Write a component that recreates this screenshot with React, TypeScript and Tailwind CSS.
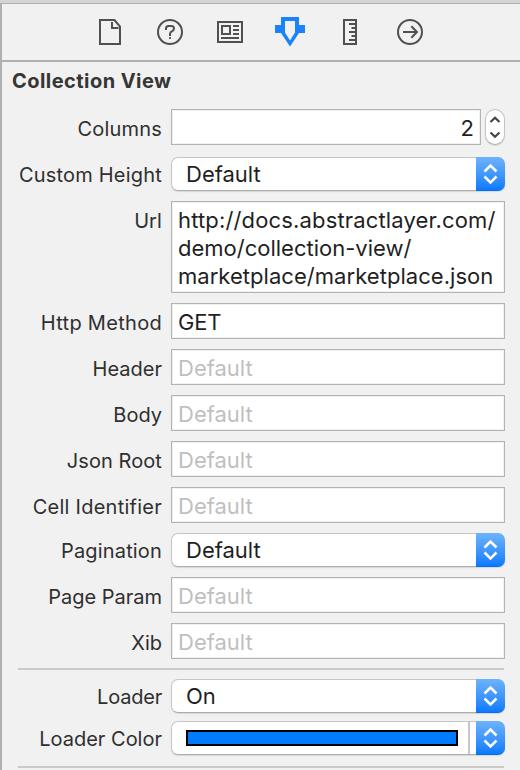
import React from 'react';

function Label({ text, className = '' }: { text: string; className?: string }) {
  return (
    <div className={`w-[160px] shrink-0 whitespace-nowrap text-right text-[20px] leading-7 text-[#2f2f2f] ${className}`}>
      {text}
    </div>
  );
}

function FieldRow({
  label,
  tracking,
  value,
}: {
  label: string;
  tracking?: string;
  value?: string;
}) {
  return (
    <div className="mb-2.5 flex h-9">
      <Label text={label} className={`pt-1.5 ${tracking ?? ''}`} />
      <div
        className={`ml-[9px] w-[334px] border border-[#b3b3b3] bg-white pl-1.5 pt-1 text-[22px] leading-7 shadow-[inset_0_0_0_1px_#f0f0f0] ${
          value ? 'tracking-[-0.2px] text-[#1f1f1f]' : 'text-[#bfbfbf]'
        }`}
      >
        {value ?? 'Default'}
      </div>
    </div>
  );
}

function Arrows() {
  return (
    <div className="flex h-[34px] w-[29px] shrink-0 items-center justify-center rounded-r-[7px] border-b border-[#0a6df0] bg-linear-to-b from-[#6cb3fa] to-[#047aff]">
      <svg width="29" height="34" viewBox="0 0 29 34" fill="none" stroke="#fff" strokeWidth="2.5" className="mt-px">
        <path d="M8.5 14.5 14.5 8.5 20.5 14.5M8.5 19.5 14.5 25.5 20.5 19.5" />
      </svg>
    </div>
  );
}

function PopupRow({
  label,
  tracking = '',
  className = 'mb-2.5',
  children,
}: {
  label: string;
  tracking?: string;
  className?: string;
  children: React.ReactNode;
}) {
  return (
    <div className={`flex h-[34px] ${className}`}>
      <Label text={label} className={`pt-1 ${tracking}`} />
      <div className="ml-[9px] flex w-[334px] rounded-[7px] shadow-[0_1px_1px_#d8d8d8]">
        <div className="flex flex-1 rounded-l-[7px] border border-r-0 border-[#c6c6c6] border-b-[#adadad] bg-white pl-3.5 text-[22px] leading-8 text-[#1f1f1f]">
          {children}
        </div>
        <Arrows />
      </div>
    </div>
  );
}

function Toolbar() {
  return (
    <div className="h-[58px] border-b-2 border-[#b0b0b0]">
      <svg width="518" height="56" viewBox="2 4 518 56" fill="none" stroke="#505050" strokeWidth="2">
        <path d="M100 20H114.5L120 26.5V44H100Z" />
        <path d="M112 22V28H118.5" />
        <circle cx="170" cy="32" r="12" />
        <path d="M166 30V28.5Q166 26 168.5 26H171.5Q174 26 174 28.5Q174 30.3 172 31.2Q170 32 170 34V36M170 37.2V39" />
        <path d="M218 22H242V42H218ZM222 26H230V34H222ZM233 26H239M233 30H239M233 34H239M221 38H239" />
        <path
          d="M281 17H299V25H305V33H299L290 46.5 281 33H275V25H281ZM285 21V32.5L290 40.5 295 32.5V21Z"
          fill="#1a82fc"
          fillRule="evenodd"
          stroke="none"
        />
        <path d="M344 20H356V44H344Z" />
        <path d="M349 24H355M351.5 28H355M349 32H355M351.5 36H355M349 40H355" />
        <circle cx="410" cy="32" r="12" />
        <path d="M403 32H417M411.3 26.2 417 32 411.3 37.8" />
      </svg>
    </div>
  );
}

export default function App() {
  return (
    <div className="h-[770px] w-[520px] overflow-hidden border-t-[3px] border-[#d4d4d4] bg-[#f1f1f1] font-['Inter','Liberation_Sans',sans-serif]">
      <div className="h-[767px] border-l-2 border-t border-[#b0b0b0]">
        <Toolbar />
        <h1 className="h-[47px] pl-2.5 pt-[5px] text-[20px] font-bold leading-7 tracking-[0.45px] text-[#363636]">
          Collection View
        </h1>

        <div className="mb-3 flex h-9">
          <Label text="Columns" className="pt-1.5 tracking-[0.2px]" />
          <div className="ml-[9px] w-[310px] border border-[#b3b3b3] bg-white pr-1.5 pt-1 text-right text-[22px] leading-7 text-[#1f1f1f] shadow-[inset_0_0_0_1px_#f0f0f0]">
            2
          </div>
          <div className="ml-1 h-9 w-5 rounded-full border border-[#c4c4c4] border-b-[#adadad] bg-white shadow-[0_1px_1px_#d8d8d8]">
            <svg width="18" height="34" viewBox="0 0 18 34" fill="none" stroke="#444" strokeWidth="2.2">
              <path d="M4.5 12 9 7.8 13.5 12M4.5 22.5 9 26.7 13.5 22.5" />
            </svg>
          </div>
        </div>

        <PopupRow label="Custom Height" tracking="tracking-[0.2px]">Default</PopupRow>

        <div className="mb-2.5 flex h-[92px]">
          <Label text="Url" className="pt-1.5 tracking-[0.1px]" />
          <div className="ml-[9px] w-[334px] whitespace-nowrap border border-[#b3b3b3] bg-white pl-1.5 pt-1 text-[22px] leading-7 text-[#1f1f1f] shadow-[inset_0_0_0_1px_#f0f0f0]">
            <div className="tracking-[0.15px]">http://docs.abstractlayer.com/</div>
            <div>demo/collection-view/</div>
            <div className="tracking-[0.04px]">marketplace/marketplace.json</div>
          </div>
        </div>

        <FieldRow label="Http Method" tracking="tracking-[0.3px]" value="GET" />
        <FieldRow label="Header" />
        <FieldRow label="Body" />
        <FieldRow label="Json Root" tracking="tracking-[0.07px]" />
        <FieldRow label="Cell Identifier" tracking="tracking-[0.25px]" />
        <PopupRow label="Pagination" tracking="tracking-[0.16px]">Default</PopupRow>
        <FieldRow label="Page Param" />
        <FieldRow label="Xib" />

        <div className="-mt-px mb-[9px] ml-4 h-0.5 w-[486px] bg-[#cacaca]" />

        <PopupRow label="Loader" tracking="tracking-[-0.2px]" className="mb-2">On</PopupRow>
        <PopupRow label="Loader Color" className="mb-[11px]">
          <div className="mt-2 h-4 w-[272px] border-2 border-black bg-[#007aff]" />
          <div className="ml-2.5 h-8 w-0.5 bg-[#c6c6c6]" />
        </PopupRow>

        <div className="ml-4 h-0.5 w-[486px] bg-[#cacaca]" />
      </div>
    </div>
  );
}
